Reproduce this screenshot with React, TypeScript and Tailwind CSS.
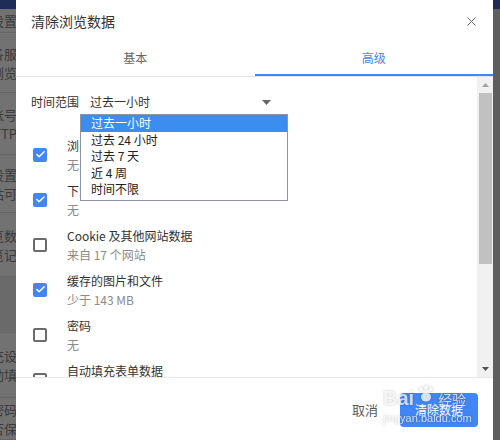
import { Check, X } from "lucide-react";

const items = [
  { checked: true, title: "浏览记录", sub: "无" },
  { checked: true, title: "下载记录", sub: "无" },
  { checked: false, title: "Cookie 及其他网站数据", sub: "来自 17 个网站" },
  { checked: true, title: "缓存的图片和文件", sub: "少于 143 MB" },
  { checked: false, title: "密码", sub: "无" },
  { checked: false, title: "自动填充表单数据", sub: "无" },
];

const ranges = ["过去一小时", "过去 24 小时", "过去 7 天", "近 4 周", "时间不限"];

// dimmed settings page behind the dialog, only a sliver shows
const bgRows = [
  { h: "h-[24px]", lines: ["设置"] },
  { h: "h-[60px]", lines: ["网络各服", "历史浏览"] },
  { h: "h-[62px]", lines: ["账号", "HTTP"] },
  { h: "h-[58px]", lines: ["设置", "网站可"] },
  { h: "h-[64px]", lines: ["浏览数", "浏览记"] },
  { h: "h-[56px]", lines: [], dark: true },
  { h: "h-[65px]", lines: ["填充设", "自动填"] },
  { h: "h-[42px]", lines: ["密码", "是否保"] },
];

function Box({ checked }: { checked: boolean }) {
  if (checked)
    return (
      <div className="w-[14px] h-[14px] rounded-[2px] bg-[#4285f4] flex items-center justify-center shrink-0">
        <Check size={11} strokeWidth={3.2} className="text-white" />
      </div>
    );
  return <div className="w-[14px] h-[14px] rounded-[2px] border-2 border-[#6b6b6b] shrink-0" />;
}

export default function App() {
  return (
    <div className="relative w-[500px] h-[440px] overflow-hidden bg-[#5e5e5e] font-['Noto_Sans_CJK_SC',sans-serif]">
      <div className="h-[9px] bg-[#1f2c58]" />
      <div className="flex flex-col w-[16px] overflow-hidden bg-[#727272] text-[13px] text-[#3a3a3a]">
        {bgRows.map((r, i) => (
          <div
            key={i}
            className={`${r.h} flex flex-col justify-center border-b border-[#666] ${r.dark ? "bg-[#6a6a6a]" : ""}`}
          >
            {r.lines.map((l) => (
              <div key={l} className="flex justify-end whitespace-nowrap leading-[19px] -mr-[1px]">
                {l}
              </div>
            ))}
          </div>
        ))}
      </div>

      {/* dialog */}
      <div className="absolute left-[16px] top-0 w-[477px] h-[440px] bg-white flex flex-col">
        <div className="h-[42px] flex items-center justify-between pl-[15px] pr-[14px]">
          <span className="text-[14px] text-[#333]">清除浏览数据</span>
          <X size={15} strokeWidth={1.6} className="text-[#666]" />
        </div>

        <div className="flex border-b border-[#e4e4e4] text-[12px]">
          <div className="flex-1 h-[34px] flex items-center justify-center pb-[2px] text-[#666]">基本</div>
          <div className="flex-1 h-[34px] flex items-center justify-center text-[#4285f4] border-b-2 border-[#4285f4]">
            高级
          </div>
        </div>

        <div className="flex h-[300px]">
          <div className="relative flex-1 pl-[15px] pt-[13px] overflow-hidden">
            <div className="flex items-center h-[24px] text-[12px] text-[#333]">
              <span className="w-[49px]">时间范围</span>
              <div className="relative w-[205px] h-[24px] flex items-center justify-between pl-[10px] pr-[14px]">
                <span>过去一小时</span>
                <svg width="9" height="5" viewBox="0 0 9 5">
                  <path d="M0 0h9L4.5 5z" fill="#666" />
                </svg>
                <div className="absolute left-0 top-full z-10 w-[208px] bg-white border border-[#8c95a8] pb-[2px]">
                  {ranges.map((r, i) => (
                    <div
                      key={r}
                      className={`h-[16.5px] leading-[16.5px] pl-[10px] ${i === 0 ? "bg-[#3a8ef0] text-white" : "text-[#222]"}`}
                    >
                      {r}
                    </div>
                  ))}
                </div>
              </div>
            </div>

            <div className="flex flex-col mt-[18px]">
              {items.map((it) => (
                <div key={it.title} className="h-[45px] flex items-center pl-[2px] shrink-0">
                  <Box checked={it.checked} />
                  <div className="ml-[20px] flex flex-col text-[12px] leading-[19px]">
                    <span className="text-[#333]">{it.title}</span>
                    <span className="text-[#8a8a8a]">{it.sub}</span>
                  </div>
                </div>
              ))}
            </div>
          </div>

          <div className="w-[16px] bg-[#f1f1f1] flex flex-col items-center">
            <div className="h-[16px] flex items-center justify-center">
              <svg width="7" height="4" viewBox="0 0 7 4">
                <path d="M0 4h7L3.5 0z" fill="#a3a3a3" />
              </svg>
            </div>
            <div className="w-[13px] h-[171px] bg-[#c1c1c1] ml-[1px]" />
            <div className="flex-1" />
            <div className="h-[16px] flex items-center justify-center">
              <svg width="7" height="4" viewBox="0 0 7 4">
                <path d="M0 0h7L3.5 4z" fill="#505050" />
              </svg>
            </div>
          </div>
        </div>

        <div className="flex-1 border-t border-[#e8e8e8] flex items-start justify-end pt-[15px] pr-[15px]">
          <span className="h-[34px] flex items-center text-[13px] text-[#5a5a5a] mr-[22px]">取消</span>
          <div className="w-[78px] h-[34px] rounded-[4px] bg-[#4285f4] flex items-center justify-center text-[12px] text-white">
            清除数据
          </div>
        </div>
      </div>

      {/* watermark */}
      <div className="absolute left-[383px] top-[385px] flex flex-col text-white/75 pointer-events-none drop-shadow-[0_0_1px_rgba(0,0,0,0.3)]">
        <div className="flex items-end gap-[2px]">
          <span className="font-['Liberation_Sans',sans-serif] font-bold text-[20px] leading-[22px]">Bai</span>
          <svg width="20" height="18" viewBox="0 0 20 18" className="opacity-80 mb-[6px]">
            <circle cx="5" cy="4" r="2.2" fill="white" />
            <circle cx="10" cy="2.5" r="2.2" fill="white" />
            <circle cx="15" cy="4" r="2.2" fill="white" />
            <ellipse cx="10" cy="12" rx="5" ry="4.5" fill="white" />
          </svg>
          <span className="text-[14px] leading-[20px]">经验</span>
        </div>
        <span className="font-['Liberation_Sans',sans-serif] text-[11px] leading-[18px]">jingyan.baidu.com</span>
      </div>
    </div>
  );
}
